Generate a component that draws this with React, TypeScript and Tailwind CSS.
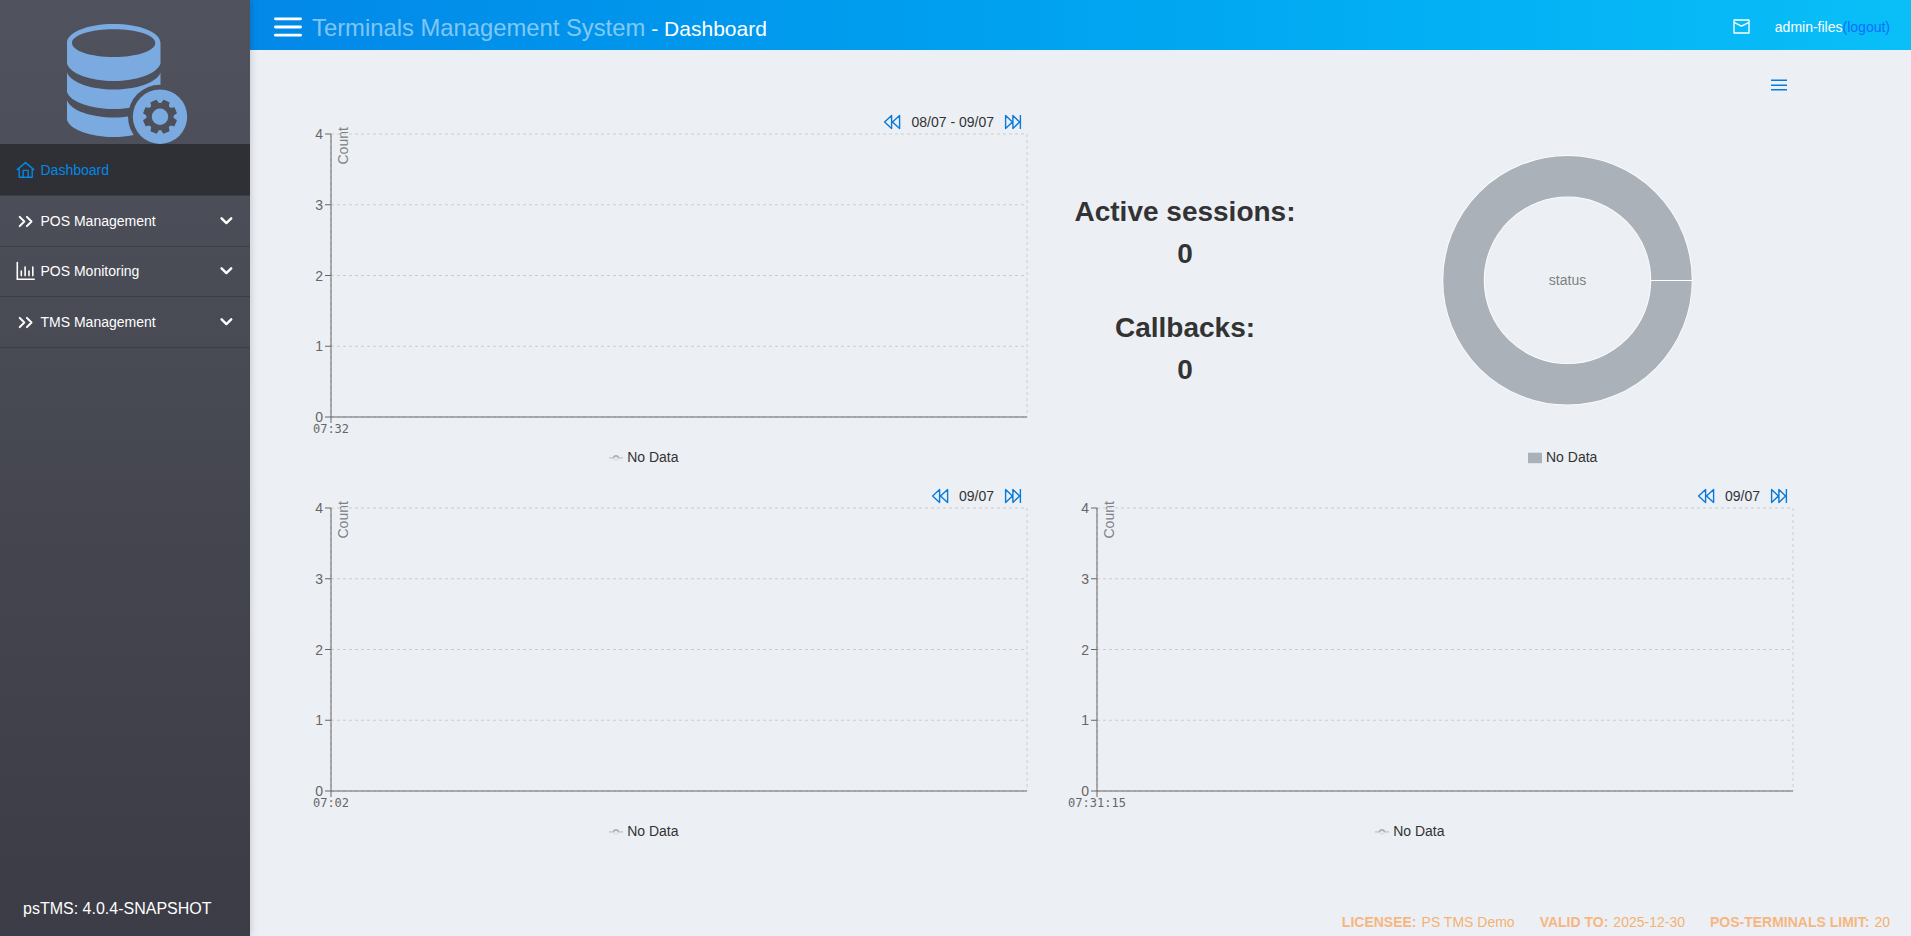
import React from "react";

const Chevron = () => (
  <svg width="14" height="10" viewBox="0 0 14 10" fill="none" stroke="#fff" strokeWidth="2.4" strokeLinecap="round" strokeLinejoin="round">
    <path d="M1.6 2.3l4.8 4.8 4.8-4.8" />
  </svg>
);

const HomeIcon = () => (
  <svg width="20" height="18" viewBox="0 0 20 18" fill="none" stroke="currentColor" strokeWidth="1.4" strokeLinecap="round" strokeLinejoin="round">
    <path d="M1.2 8.6L9.5 1.6l8.3 7M3.2 7.2v9.1h13V7.2M7.2 16.3V9.4h5v6.9" />
  </svg>
);

const DoubleRight = () => (
  <svg width="20" height="18" viewBox="0 0 20 18" fill="none" stroke="currentColor" strokeWidth="2" strokeLinecap="round" strokeLinejoin="round">
    <path d="M3.700 4.900l4.600 4.600-4.600 4.600M10.900 4.900l4.600 4.600-4.600 4.600" />
  </svg>
);

const BarsIcon = () => (
  <svg width="20" height="20" viewBox="0 0 20 20" fill="none" stroke="currentColor" strokeWidth="1.6" strokeLinecap="round">
    <path d="M1.300 1.600v16.700h16.900M5.300 10v4.600M9.100 6v8.600M13 10v4.600M16.800 6v8.600" />
  </svg>
);

const Logo = () => {
  const teeth = [0, 1, 2, 3, 4, 5, 6, 7];
  return (
    <svg className="block" width="250" height="144" viewBox="0 0 250 144">
      <defs>
        <mask id="cut">
          <rect width="250" height="144" fill="#fff" />
          <circle cx="160" cy="116.7" r="32" fill="#000" />
        </mask>
        <mask id="gear">
          <rect width="250" height="144" fill="#fff" />
          <g transform="translate(160 116.7)" fill="#000">
            <circle r="13.6" />
            {teeth.map((t) => (
              <path key={t} transform={`rotate(${t * 45 + 22.5})`} d="M-4.6 -11L-3.3 -17H3.3L4.6 -11z" />
            ))}
            <circle r="8.2" fill="#fff" />
          </g>
        </mask>
      </defs>
      <g fill="#7aaae0" mask="url(#cut)">
        <path fillRule="evenodd" d="M67 43C67 32 88 24 113.700 24S160.500 32 160.500 43V63.500C157 74 136 81 113.700 81S70 74 67 63.500zM72 43C72 51 91 57 113.700 57S155.300 51 155.300 43 136 29.300 113.700 29.300 72 35 72 43z" />
        <path d="M67 72.500C71 83 92 89.500 113.700 89.500S157 83 160.500 72.500V92C157 102 136 109 113.700 109S70 102 67 92z" />
        <path d="M67 100.300C71 111 92 117.500 113.700 117.500S157 111 160.500 100.300V120C157 130 136 137 113.700 137S70 130 67 120z" />
      </g>
      <circle cx="160" cy="116.7" r="27.2" fill="#7aaae0" mask="url(#gear)" />
    </svg>
  );
};

const Back = () => (
  <svg width="18" height="16" viewBox="0 0 18 16" fill="none" stroke="#0a7ad8" strokeWidth="1.4" strokeLinejoin="round">
    <path d="M8.600 1.500v13L1.600 8zM16.600 1.500v13L9.500 8z" />
  </svg>
);

const Forward = () => (
  <svg width="18" height="16" viewBox="0 0 18 16" fill="none" stroke="#0a7ad8" strokeWidth="1.4" strokeLinejoin="round">
    <path d="M1.600 1.500v13L8.400 8zM8.900 1.500v13L15.600 8zM16.400 1v14" />
  </svg>
);

const Chart = ({ range, time }: { range: string; time: string }) => {
  const ys = [0, 70.75, 141.5, 212.25, 283];
  return (
    <div className="flex h-[374px] w-[766px] flex-col">
      <div className="flex h-6 items-center justify-end gap-[10px] pr-[10px] text-sm text-[#333]">
        <Back />
        <span>{range}</span>
        <Forward />
      </div>
      <svg className="block overflow-visible" width="766" height="350" viewBox="0 0 766 350">
        <g stroke="#ccc" strokeDasharray="3 3" fill="none">
          {ys.map((y) => (
            <path key={y} d={`M65 ${y}H761`} />
          ))}
          <path d="M65 0V283M761 0V283" />
        </g>
        <g stroke="#666" fill="none">
          <path d="M65 0V283M65 283H761M65 283v6" />
          {ys.map((y) => (
            <path key={y} d={`M59 ${y}h6`} />
          ))}
        </g>
        <g fill="#666" fontSize="14" textAnchor="end">
          {ys.map((y, i) => (
            <text key={y} x="57" y={y + 5}>{4 - i}</text>
          ))}
        </g>
        <text x="65" y="299" fill="#666" fontSize="12" textAnchor="middle" className="font-['DejaVu_Sans_Mono',monospace]">{time}</text>
        <text transform="translate(82 30.500) rotate(-90)" fill="#808080" fontSize="14">Count</text>
        <svg x="343" y="316" width="14" height="14" viewBox="0 0 32 32" fill="none" stroke="#aab0b8" strokeWidth="4">
          <path strokeOpacity=".5" d="M0 18h10.700M21.300 18H32" />
          <path d="M10.700 18a5.330 5.330 0 0 1 10.600 0" />
          <path strokeOpacity=".2" d="M10.700 18a5.330 5.330 0 0 0 10.600 0" />
        </svg>
        <text x="361.200" y="328" fill="#333" fontSize="14">No Data</text>
      </svg>
    </div>
  );
};

const NavItem = ({ label, icon, height }: { label: string; icon: React.ReactNode; height: string }) => (
  <div className={`flex items-center border-b border-[#3c3d46] pl-4 pr-[16px] text-sm text-white ${height}`}>
    <span className="w-[24.5px]">{icon}</span>
    <span className="flex-1">{label}</span>
    <Chevron />
  </div>
);

export default function App() {
  return (
    <div className="flex h-[936px] w-[1911px] overflow-hidden bg-[#ecf0f5] font-['Liberation_Sans',Arial,sans-serif]">
      <aside className="z-10 flex h-full w-[250px] shrink-0 flex-col bg-gradient-to-b from-[#50525d] to-[#3b3c45] shadow-[0_0_8px_rgba(0,0,0,0.2)]">
        <Logo />
        <div className="flex h-[52px] items-center border-b border-[#3c3d46] bg-[#2f3035] pl-4 text-sm text-[#0388e5]">
          <span className="w-[24.5px]"><HomeIcon /></span>
          <span>Dashboard</span>
        </div>
        <NavItem label="POS Management" icon={<DoubleRight />} height="h-[51px]" />
        <NavItem label="POS Monitoring" icon={<BarsIcon />} height="h-[50px] pb-px" />
        <NavItem label="TMS Management" icon={<DoubleRight />} height="h-[51px]" />
        <div className="mt-auto pb-[15px] pl-[23px] text-base text-white">psTMS: 4.0.4-SNAPSHOT</div>
      </aside>
      <div className="flex min-w-0 flex-1 flex-col">
        <header className="flex h-[50px] shrink-0 items-center bg-gradient-to-r from-[#0388e8] to-[#0abff8] pl-[24px] pr-[21px]">
          <svg className="mt-1" width="28" height="20" viewBox="0 0 28 20" stroke="#fff" strokeWidth="2.800" strokeLinecap="round">
            <path d="M1.400 1.800h25.200M1.400 10h25.200M1.400 18.200h25.200" />
          </svg>
          <div className="flex flex-1 items-baseline pl-[10px] pt-[6px] text-[21px] leading-7 text-white">
            <span className="mr-[6px] text-[23.8px] leading-7 text-white/50">Terminals Management System</span>
            <span>- Dashboard</span>
          </div>
          <svg className="mr-[25px] mt-[3px]" width="17" height="15" viewBox="0 0 17 15" fill="none" stroke="#fff" strokeWidth="1.300" strokeLinejoin="round">
            <path d="M1 1h15v13H1zM1 3.300l7.500 3.900L16 3.300" />
          </svg>
          <div className="pt-[3px] text-sm text-white">admin-files<span className="text-[#0d6efd]">(logout)</span></div>
        </header>
        <main className="flex flex-1 flex-col pl-4">
          <div className="flex h-[60px] items-start justify-end pr-[124px] pt-[28px]">
            <svg width="16" height="14" viewBox="0 0 16 14" stroke="#0a7ad8" strokeWidth="1.500">
              <path d="M0 2.250h16M0 7.250h16M0 11.750h16" />
            </svg>
          </div>
          <div className="flex h-[374px]">
            <Chart range="08/07 - 09/07" time="07:32" />
            <section className="flex w-[306px] flex-col items-center pt-[81px] text-[28px] font-bold leading-[42px] text-[#333]">
              <div>Active sessions:</div>
              <div>0</div>
              <div className="mt-8">Callbacks:</div>
              <div>0</div>
            </section>
            <svg width="460" height="374" viewBox="0 0 460 374">
              <circle cx="229.500" cy="170.300" r="104" fill="none" stroke="#fff" strokeWidth="42" />
              <circle cx="229.500" cy="170.300" r="104" fill="none" stroke="#aab1b9" strokeWidth="40.500" />
              <path d="M313 170.500h41.500" stroke="#fff" />
              <text x="229.500" y="175" textAnchor="middle" fontSize="14" fill="#808080">status</text>
              <path d="M190 342.700h14v10.500h-14z" fill="#aab1b9" />
              <text x="208" y="352" fontSize="14" fill="#333">No Data</text>
            </svg>
          </div>
          <div className="flex h-[374px]">
            <Chart range="09/07" time="07:02" />
            <Chart range="09/07" time="07:31:15" />
          </div>
          <footer className="mt-auto flex justify-end gap-[25px] pb-1 pr-[21px] text-sm text-[#f5b06f]">
            <span><b className="mr-[5px] text-[#f6b681]">LICENSEE:</b>PS TMS Demo</span>
            <span><b className="mr-[5px] text-[#f6b681]">VALID TO:</b>2025-12-30</span>
            <span><b className="mr-[5px] text-[#f6b681]">POS-TERMINALS LIMIT:</b>20</span>
          </footer>
        </main>
      </div>
    </div>
  );
}
